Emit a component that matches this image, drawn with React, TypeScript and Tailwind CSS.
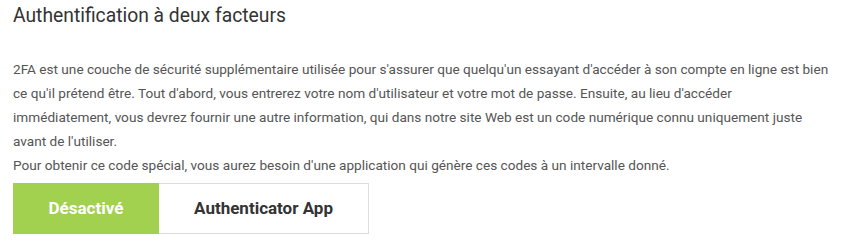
const App = () => {
    return (
        <div className="min-h-screen bg-white px-[13px] pt-[2px] font-['Roboto',sans-serif]">
            <h2 className="text-[19.3px] leading-[27px] text-[#333] font-normal">Authentification à deux facteurs</h2>
            <div className="mt-[28px] text-[13.62px] leading-[24px] text-[#555]">
                <p>
                    2FA est une couche de sécurité supplémentaire utilisée pour s'assurer que quelqu'un essayant d'accéder à son compte en ligne est bien ce qu'il prétend être. Tout d'abord, vous entrerez votre nom d'utilisateur et votre mot de passe. Ensuite, au lieu d'accéder immédiatement, vous devrez fournir une autre information, qui dans notre site Web est un code numérique connu uniquement juste avant de l'utiliser.
                </p>
                <p>Pour obtenir ce code spécial, vous aurez besoin d'une application qui génère ces codes à un intervalle donné.</p>
            </div>
            <div className="mt-[6px] flex h-[51px] w-[356px]">
                <button className="w-[146px] bg-[#a2d04f] text-white text-[17px] font-bold">Désactivé</button>
                <button className="flex-1 border border-l-0 border-[#ddd] bg-white text-[#333] text-[17px] font-bold">Authenticator App</button>
            </div>
        </div>
    );
};

export default App;
